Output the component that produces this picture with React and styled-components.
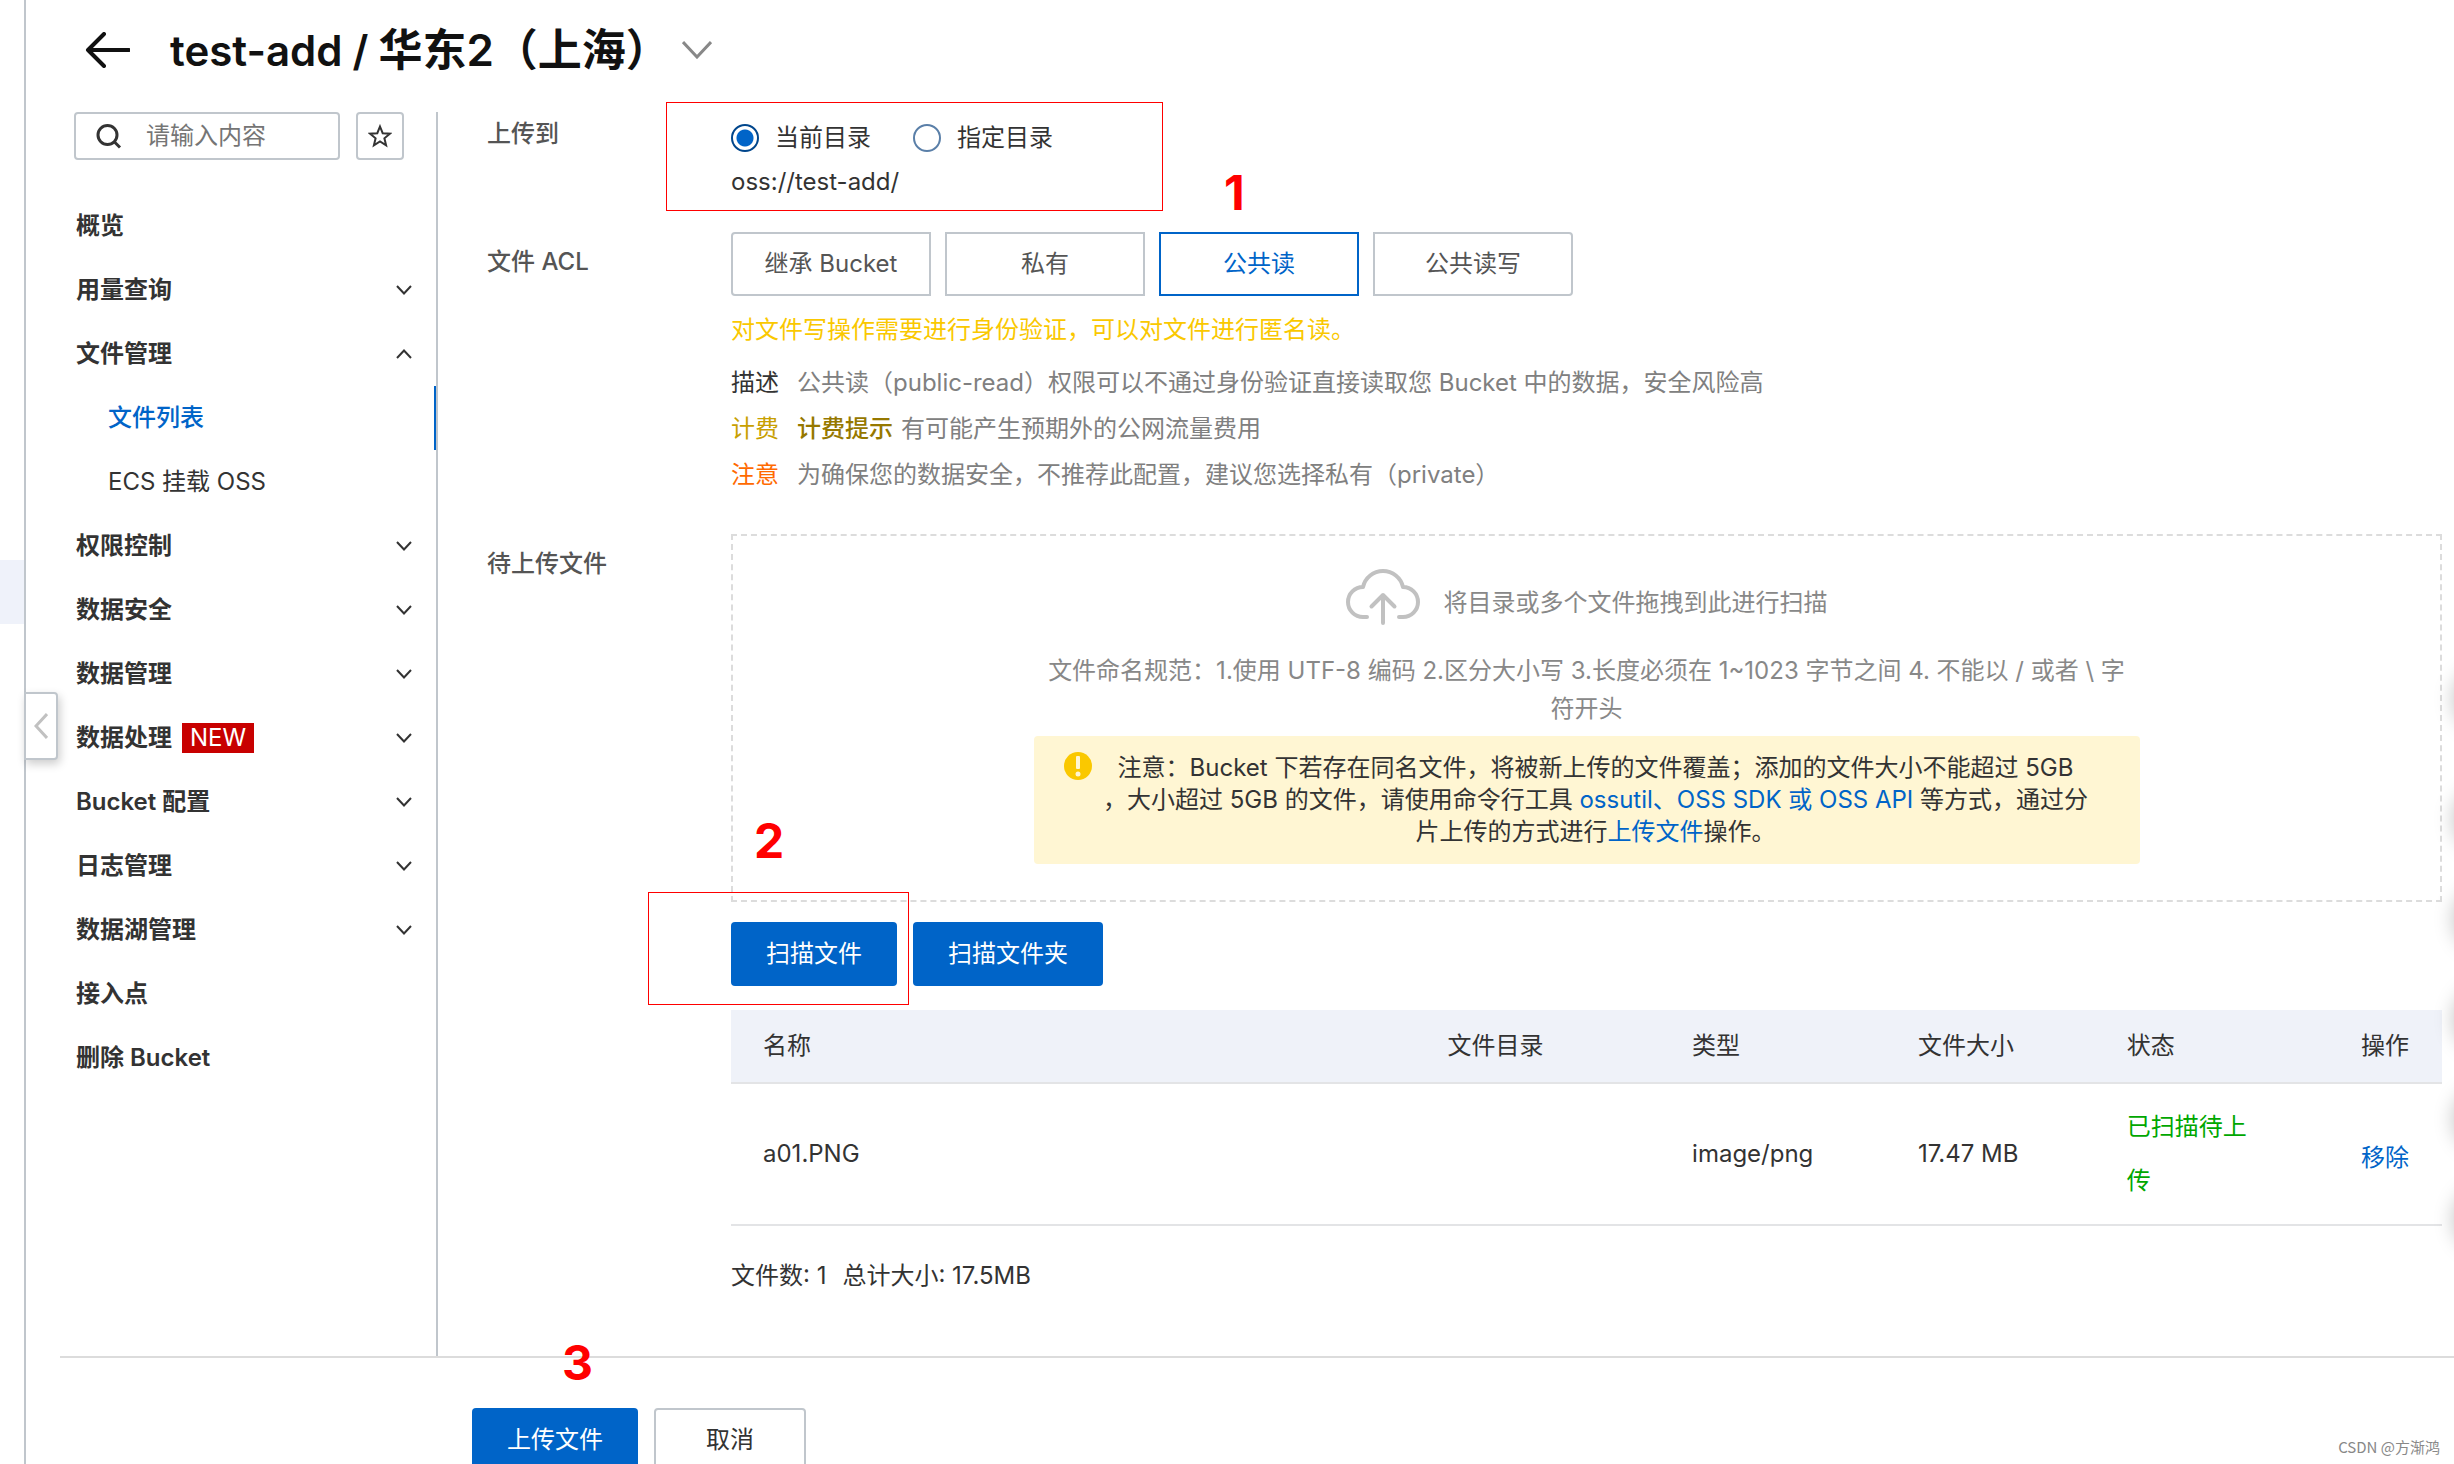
import React from "react";
import styled, { createGlobalStyle, css } from "styled-components";

const GlobalStyle = createGlobalStyle`
  * {
    box-sizing: border-box;
  }
  body {
    margin: 0;
    overflow: hidden;
    background: #fff;
    color: #333;
    font-family: Inter, "Noto Sans CJK SC", sans-serif;
    font-size: 24px;
    line-height: 32px;
  }
  button, input {
    font: inherit;
    color: inherit;
  }
  button {
    cursor: pointer;
    padding: 0;
  }
  a {
    color: #0064c8;
    text-decoration: none;
  }
`;

const Shell = styled.div`
  position: relative;
  display: flex;
  height: 100vh;
  overflow: hidden;
`;

const Rail = styled.div`
  position: relative;
  flex: 0 0 26px;
  border-right: 2px solid #c0c6cc;
  padding-top: 560px;
`;

const RailActive = styled.div`
  height: 64px;
  background: #eff2fa;
`;

const Collapse = styled.button`
  position: absolute;
  left: 24px;
  top: 692px;
  width: 34px;
  height: 68px;
  display: flex;
  align-items: center;
  justify-content: center;
  background: #fff;
  border: 2px solid #c0c6cc;
  border-radius: 0 4px 4px 0;
  box-shadow: 2px 4px 10px rgba(0, 0, 0, 0.2);
`;

const Page = styled.div`
  flex: 1;
  min-width: 0;
  display: flex;
  flex-direction: column;
  padding-left: 34px;
`;

const Header = styled.header`
  flex: none;
  display: flex;
  align-items: center;
  height: 112px;
  padding: 0 0 12px 24px;
`;

const Title = styled.h1`
  display: flex;
  align-items: baseline;
  gap: 10px;
  margin: 0 12px 0 40px;
  font-size: 42px;
  line-height: 56px;
  font-weight: 600;
  color: #111;
`;

const Region = styled.span`
  font-size: 44px;
`;

const IconButton = styled.button`
  display: flex;
  background: none;
  border: 0;
`;

const Body = styled.div`
  flex: none;
  display: flex;
  border-bottom: 2px solid #dcdcdc;
`;

const Sidebar = styled.aside`
  flex: 0 0 378px;
  border-right: 2px solid #c0c6cc;
`;

const SearchRow = styled.div`
  display: flex;
  gap: 16px;
  padding: 0 32px 34px 14px;
`;

const SearchBox = styled.label`
  flex: 1;
  min-width: 0;
  display: flex;
  align-items: center;
  gap: 24px;
  height: 48px;
  padding-left: 20px;
  border: 2px solid #c0c6cc;
  border-radius: 4px;
  svg {
    flex: none;
  }
  input {
    width: 100%;
    min-width: 0;
    padding: 0;
    border: 0;
    outline: 0;
    background: none;
  }
  input::placeholder {
    color: #757575;
    opacity: 1;
  }
`;

const StarButton = styled.button`
  flex: 0 0 48px;
  height: 48px;
  display: flex;
  align-items: center;
  justify-content: center;
  background: #fff;
  border: 2px solid #c0c6cc;
  border-radius: 4px;
`;

const MenuItem = styled.a`
  display: flex;
  align-items: center;
  height: 64px;
  padding: 0 24px 0 16px;
  color: #333;
  font-weight: 600;
  svg {
    margin-left: auto;
  }
  ${(p) =>
    p.$sub &&
    css`
      padding-left: 48px;
      font-weight: 400;
    `}
  ${(p) =>
    p.$active &&
    css`
      color: #0064c8;
      font-weight: 500;
      border-right: 2px solid #0064c8;
    `}
`;

const NewTag = styled.span`
  margin-left: 10px;
  padding: 0 8px;
  line-height: 30px;
  background: #c80000;
  color: #fff;
  font-weight: 400;
`;

const Content = styled.main`
  flex: 1;
  min-width: 0;
  padding: 0 12px 64px 49px;
`;

const Field = styled.section`
  display: grid;
  grid-template-columns: 244px minmax(0, 1fr);
  padding-top: ${(p) => p.$top || 0}px;
`;

const FieldLabel = styled.div`
  padding-top: ${(p) => p.$top || 0}px;
  color: #555;
  font-weight: 500;
`;

const RadioGroup = styled.div`
  display: flex;
  gap: 42px;
  padding-top: 10px;
`;

const Radio = styled.label`
  display: flex;
  align-items: center;
  gap: 16px;
  input {
    appearance: none;
    width: 28px;
    height: 28px;
    margin: 0;
    border: 2px solid #5a7fa8;
    border-radius: 50%;
  }
  input:checked {
    border-color: #00468c;
    background: radial-gradient(circle, #0064c8 8px, #fff 9px);
  }
`;

const Path = styled.div`
  padding-top: 12px;
`;

const AclGroup = styled.div`
  display: flex;
  gap: 14px;
`;

const AclButton = styled.button`
  width: 200px;
  height: 64px;
  background: #fff;
  border: 2px solid ${(p) => (p.$active ? "#0064c8" : "#c0c6cc")};
  color: ${(p) => (p.$active ? "#0064c8" : "#555")};
  &:first-child {
    border-radius: 4px 0 0 4px;
  }
  &:last-child {
    border-radius: 0 4px 4px 0;
  }
`;

const AclHint = styled.p`
  margin: 18px 0 14px;
  color: #fac800;
`;

const Note = styled.div`
  display: flex;
  gap: 18px;
  line-height: 46px;
  color: #808080;
  b {
    font-weight: 400;
    color: ${(p) => p.$color};
  }
  em {
    margin-right: 8px;
    font-style: normal;
    font-weight: 500;
    color: #967800;
  }
`;

const DropZone = styled.div`
  display: flex;
  flex-direction: column;
  align-items: center;
  padding: 33px 0 36px;
  border: 2px dashed #dcdcdc;
  color: #888;
`;

const DropTitle = styled.div`
  display: flex;
  align-items: flex-end;
  gap: 24px;
  span {
    padding-bottom: 6px;
  }
`;

const NamingRule = styled.p`
  margin: 27px 0 8px;
  line-height: 38px;
  text-align: center;
`;

const Notice = styled.div`
  display: flex;
  align-items: flex-start;
  width: 65%;
  max-width: 1106px;
  padding: 16px 40px 16px 30px;
  border-radius: 4px;
  background: #fff6d3;
  color: #333;
  svg {
    flex: none;
  }
  p {
    flex: 1;
    margin: 0;
    text-align: center;
    white-space: nowrap;
  }
`;

const Buttons = styled.div`
  display: flex;
  gap: 16px;
  padding: ${(p) => p.$pad};
`;

const Button = styled.button`
  height: 64px;
  padding: 0 ${(p) => (p.$primary ? 35 : 50)}px;
  border: ${(p) => (p.$primary ? 0 : "2px solid #c0c6cc")};
  border-radius: 4px;
  background: ${(p) => (p.$primary ? "#0064c8" : "#fff")};
  color: ${(p) => (p.$primary ? "#fff" : "#333")};
`;

const Table = styled.table`
  width: 100%;
  table-layout: fixed;
  border-collapse: separate;
  border-spacing: 0;
  th,
  td {
    padding: 0 0 0 32px;
    text-align: left;
    font-weight: 400;
    border-bottom: 2px solid #e3e4e6;
  }
  th {
    height: 74px;
    background: #eff2f9;
  }
  td {
    height: 142px;
  }
`;

const Col = styled.col`
  width: ${(p) => p.$w};
`;

const Status = styled.span`
  display: block;
  width: 136px;
  line-height: 54px;
  color: #00a700;
`;

const RowAction = styled.a`
  display: block;
  padding-top: 8px;
`;

const Summary = styled.div`
  display: flex;
  gap: 16px;
  padding-top: 34px;
`;

const Mark = styled.div`
  position: absolute;
  left: ${(p) => p.$x}px;
  top: ${(p) => p.$y}px;
  color: #ff0000;
  font-size: 48px;
  line-height: 48px;
  font-weight: 700;
`;

const MarkBox = styled.div`
  position: absolute;
  left: ${(p) => p.$x}px;
  top: ${(p) => p.$y}px;
  width: ${(p) => p.$w}px;
  height: ${(p) => p.$h}px;
  border: 1px solid #ff0000;
  pointer-events: none;
`;

// tucked away behind the right edge, only the shadows peek out
const FloatBar = styled.div`
  position: absolute;
  left: 100%;
  top: 665px;
  display: flex;
  flex-direction: column;
  gap: 32px;
`;

const FloatDot = styled.span`
  width: 68px;
  height: 68px;
  border-radius: 50%;
  background: #fff;
  box-shadow: 0 0 20px rgba(0, 0, 0, 0.25);
  &:first-child {
    margin-bottom: 20px;
  }
`;

const Watermark = styled.div`
  position: absolute;
  right: 14px;
  bottom: 5px;
  font-family: "Noto Sans CJK SC", sans-serif;
  font-size: 15px;
  line-height: 24px;
  color: #888;
`;

const Chevron = ({ up }) => (
  <svg width="16" height="10" viewBox="0 0 16 10" fill="none" stroke="#333" strokeWidth="2">
    <path d={up ? "M1 9 8 1.5 15 9" : "M1 1 8 8.5 15 1"} />
  </svg>
);

const CloudIcon = () => (
  <svg
    width="74"
    height="56"
    viewBox="0 0 74 56"
    fill="none"
    stroke="#c1c1c1"
    strokeWidth="4"
    strokeLinecap="round"
    strokeLinejoin="round"
  >
    <path d="M21 48h-4a15 15 0 0 1 0-30A20.500 20.500 0 0 1 57 18a15 15 0 0 1 0 30h-4" />
    <path d="M37 54V26M25.500 37.500 37 26l11.500 11.500" />
  </svg>
);

const WarnIcon = () => (
  <svg width="28" height="28" viewBox="0 0 28 28">
    <circle cx="14" cy="14" r="14" fill="#fac800" />
    <rect x="12" y="4" width="4" height="13" rx="1" fill="#fff6d3" />
    <circle cx="14" cy="22" r="2.500" fill="#fff6d3" />
  </svg>
);

const menu = [
  { text: "概览" },
  { text: "用量查询", arrow: "down" },
  { text: "文件管理", arrow: "up" },
  { text: "文件列表", sub: true, active: true },
  { text: "ECS 挂载 OSS", sub: true },
  { text: "权限控制", arrow: "down" },
  { text: "数据安全", arrow: "down" },
  { text: "数据管理", arrow: "down" },
  { text: "数据处理", arrow: "down", isNew: true },
  { text: "Bucket 配置", arrow: "down" },
  { text: "日志管理", arrow: "down" },
  { text: "数据湖管理", arrow: "down" },
  { text: "接入点" },
  { text: "删除 Bucket" },
];

const acls = ["继承 Bucket", "私有", "公共读", "公共读写"];

const App = () => {
  const [acl, setAcl] = React.useState("公共读");

  return (
    <Shell>
      <GlobalStyle />
      <Rail>
        <RailActive />
      </Rail>
      <Page>
        <Header>
          <IconButton aria-label="返回">
            <svg width="46" height="36" viewBox="0 0 46 36" fill="none" stroke="#111" strokeWidth="4">
              <path d="M20 2 4 18l16 16M4 18h41" strokeLinejoin="round" strokeLinecap="round" />
            </svg>
          </IconButton>
          <Title>
            <span>test-add</span>
            <span>/</span>
            <Region>华东2（上海）</Region>
          </Title>
          <IconButton aria-label="切换">
            <svg width="30" height="18" viewBox="0 0 30 18" fill="none" stroke="#888" strokeWidth="3">
              <path d="M1 1l14 15L29 1" />
            </svg>
          </IconButton>
        </Header>

        <Body>
          <Sidebar>
            <SearchRow>
              <SearchBox>
                <svg width="26" height="26" viewBox="0 0 26 26" fill="none" stroke="#333" strokeWidth="3">
                  <circle cx="11.500" cy="12" r="9.500" />
                  <path d="M18 18.500l6 6" />
                </svg>
                <input placeholder="请输入内容" aria-label="搜索" />
              </SearchBox>
              <StarButton aria-label="收藏">
                <svg width="24" height="24" viewBox="0 0 24 24" fill="none" stroke="#333" strokeWidth="2">
                  <path d="M12 2.500l2.700 6.700 7.200.5-5.500 4.600 1.700 7L12 17.500l-6.100 3.800 1.700-7-5.500-4.600 7.200-.5z" />
                </svg>
              </StarButton>
            </SearchRow>
            <nav>
              {menu.map((item) => (
                <MenuItem key={item.text} href="#" $sub={item.sub} $active={item.active}>
                  {item.text}
                  {item.isNew && <NewTag>NEW</NewTag>}
                  {item.arrow && <Chevron up={item.arrow === "up"} />}
                </MenuItem>
              ))}
            </nav>
          </Sidebar>

          <Content>
            <Field>
              <FieldLabel $top={6}>上传到</FieldLabel>
              <div>
                <RadioGroup>
                  <Radio>
                    <input type="radio" name="dir" defaultChecked />
                    当前目录
                  </Radio>
                  <Radio>
                    <input type="radio" name="dir" />
                    指定目录
                  </Radio>
                </RadioGroup>
                <Path>oss://test-add/</Path>
              </div>
            </Field>

            <Field $top={34}>
              <FieldLabel $top={14}>文件 ACL</FieldLabel>
              <div>
                <AclGroup>
                  {acls.map((name) => (
                    <AclButton key={name} $active={name === acl} onClick={() => setAcl(name)}>
                      {name}
                    </AclButton>
                  ))}
                </AclGroup>
                <AclHint>对文件写操作需要进行身份验证，可以对文件进行匿名读。</AclHint>
                <Note $color="#333">
                  <b>描述</b>
                  <span>公共读（public-read）权限可以不通过身份验证直接读取您 Bucket 中的数据，安全风险高</span>
                </Note>
                <Note $color="#c8a000">
                  <b>计费</b>
                  <span>
                    <em>计费提示</em>
                    有可能产生预期外的公网流量费用
                  </span>
                </Note>
                <Note $color="#ff6a00">
                  <b>注意</b>
                  <span>为确保您的数据安全，不推荐此配置，建议您选择私有（private）</span>
                </Note>
              </div>
            </Field>

            <Field $top={36}>
              <FieldLabel $top={14}>待上传文件</FieldLabel>
              <div>
                <DropZone>
                  <DropTitle>
                    <CloudIcon />
                    <span>将目录或多个文件拖拽到此进行扫描</span>
                  </DropTitle>
                  <NamingRule>
                    文件命名规范：1.使用 UTF-8 编码 2.区分大小写 3.长度必须在 1~1023 字节之间 4. 不能以 / 或者 \ 字
                    <br />
                    符开头
                  </NamingRule>
                  <Notice>
                    <WarnIcon />
                    <p>
                      注意：Bucket 下若存在同名文件，将被新上传的文件覆盖；添加的文件大小不能超过 5GB
                      <br />
                      ，大小超过 5GB 的文件，请使用命令行工具 <a href="#">ossutil、OSS SDK 或 OSS API</a> 等方式，通过分
                      <br />
                      片上传的方式进行<a href="#">上传文件</a>操作。
                    </p>
                  </Notice>
                </DropZone>
                <Buttons $pad="20px 0 24px">
                  <Button $primary>扫描文件</Button>
                  <Button $primary>扫描文件夹</Button>
                </Buttons>
                <Table>
                  <colgroup>
                    <Col $w="40%" />
                    <Col $w="14.3%" />
                    <Col $w="13.2%" />
                    <Col $w="12.2%" />
                    <Col $w="13.7%" />
                    <Col $w="auto" />
                  </colgroup>
                  <thead>
                    <tr>
                      <th>名称</th>
                      <th>文件目录</th>
                      <th>类型</th>
                      <th>文件大小</th>
                      <th>状态</th>
                      <th>操作</th>
                    </tr>
                  </thead>
                  <tbody>
                    <tr>
                      <td>a01.PNG</td>
                      <td />
                      <td>image/png</td>
                      <td>17.47 MB</td>
                      <td>
                        <Status>已扫描待上传</Status>
                      </td>
                      <td>
                        <RowAction href="#">移除</RowAction>
                      </td>
                    </tr>
                  </tbody>
                </Table>
                <Summary>
                  <span>文件数: 1</span>
                  <span>总计大小: 17.5MB</span>
                </Summary>
              </div>
            </Field>
          </Content>
        </Body>

        <Buttons $pad="50px 0 0 412px">
          <Button $primary>上传文件</Button>
          <Button>取消</Button>
        </Buttons>
      </Page>

      <Collapse aria-label="收起">
        <svg width="14" height="26" viewBox="0 0 14 26" fill="none" stroke="#c1c1c1" strokeWidth="3">
          <path d="M13 1L2 13l11 12" />
        </svg>
      </Collapse>

      <FloatBar>
        <FloatDot />
        <FloatDot />
        <FloatDot />
        <FloatDot />
        <FloatDot />
        <FloatDot />
      </FloatBar>

      <MarkBox $x={666} $y={102} $w={497} $h={109} />
      <MarkBox $x={648} $y={892} $w={261} $h={113} />
      <Mark $x={1224} $y={169}>1</Mark>
      <Mark $x={754} $y={817}>2</Mark>
      <Mark $x={562} $y={1339}>3</Mark>
      <Watermark>CSDN @方渐鸿</Watermark>
    </Shell>
  );
};

export default App;
